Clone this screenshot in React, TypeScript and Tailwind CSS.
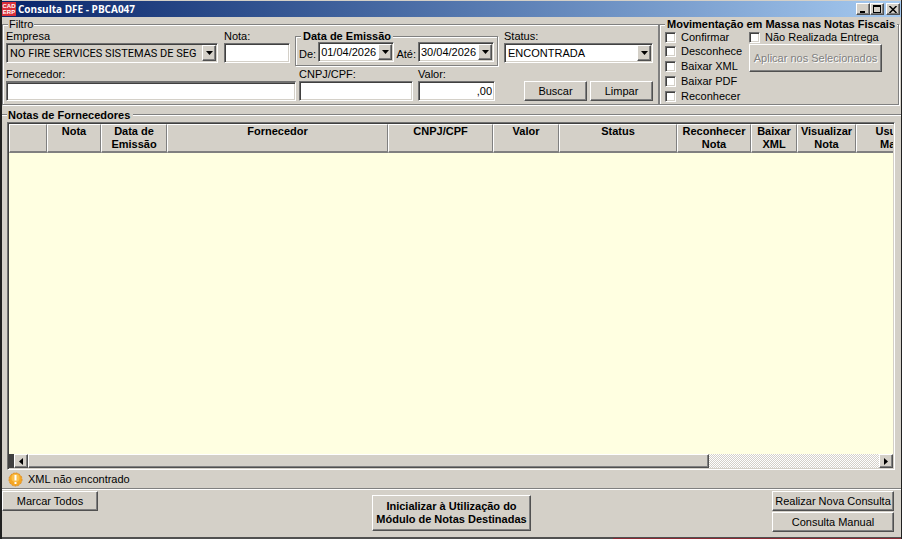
import { useState } from "react";
import type { ButtonHTMLAttributes, InputHTMLAttributes, ReactNode } from "react";

const raised =
  "border border-t-white border-l-white border-r-[#505050] border-b-[#505050] shadow-[inset_-1px_-1px_0_#808080] bg-[#d4d0c8]";
const sunken =
  "border border-t-[#707070] border-l-[#707070] border-r-white border-b-white shadow-[inset_1px_1px_0_#404040,inset_-1px_-1px_0_#d4d0c8]";
const groove =
  "min-w-0 border border-[#808080] shadow-[1px_1px_0_#fff,inset_1px_1px_0_#fff]";

const columns = [
  { title: ["", ""], width: "w-[38px]" },
  { title: ["Nota", ""], width: "w-[54px]" },
  { title: ["Data de", "Emissão"], width: "w-[66px]" },
  { title: ["Fornecedor", ""], width: "w-[221px]" },
  { title: ["CNPJ/CPF", ""], width: "w-[105px]" },
  { title: ["Valor", ""], width: "w-[66px]" },
  { title: ["Status", ""], width: "w-[118px]" },
  { title: ["Reconhecer", "Nota"], width: "w-[74px]" },
  { title: ["Baixar", "XML"], width: "w-[46px]" },
  { title: ["Visualizar", "Nota"], width: "w-[59px]" },
  { title: ["Usuário", "Manif."], width: "w-[80px]" },
];

const massActions = ["Confirmar", "Desconhece", "Baixar XML", "Baixar PDF", "Reconhecer"];

function Button({ className = "", ...props }: ButtonHTMLAttributes<HTMLButtonElement>) {
  return (
    <button
      type="button"
      className={`flex items-center justify-center whitespace-nowrap ${raised} ${className}`}
      {...props}
    />
  );
}

interface FieldProps {
  id: string;
  label: string;
  className?: string;
  children: ReactNode;
}

function Field({ id, label, className = "", children }: FieldProps) {
  return (
    <div className={`flex flex-col ${className}`}>
      <label htmlFor={id} className="h-[13px] leading-[13px]">
        {label}
      </label>
      {children}
    </div>
  );
}

function TextBox({ className = "", ...props }: InputHTMLAttributes<HTMLInputElement>) {
  return (
    <input
      type="text"
      className={`h-5 w-full bg-white px-1 outline-none ${sunken} ${className}`}
      {...props}
    />
  );
}

function Arrow() {
  return (
    <svg width="7" height="4" viewBox="0 0 7 4" fill="#000" className="shrink-0">
      <path d="M0 0h7L3.5 4z" />
    </svg>
  );
}

function ComboBox({ id, value, className = "" }: { id: string; value: string; className?: string }) {
  return (
    <div className="relative">
      <select
        id={id}
        defaultValue={value}
        className={`h-5 w-full appearance-none pl-[3px] pr-3 outline-none ${sunken} ${className}`}
      >
        <option>{value}</option>
      </select>
      <span
        className={`pointer-events-none absolute right-[2px] top-[2px] flex h-4 w-[14px] items-center justify-center ${raised}`}
      >
        <Arrow />
      </span>
    </div>
  );
}

function DateBox({ id, label, value }: { id: string; label: string; value: string }) {
  return (
    <div className="flex items-center gap-[2px]">
      <label htmlFor={id} className="pt-1">
        {label}
      </label>
      <div className={`flex h-5 w-[76px] bg-white p-px ${sunken}`}>
        <input id={id} type="text" defaultValue={value} className="min-w-0 flex-1 pl-px outline-none" />
        <Button aria-label={label} className="w-[14px] shrink-0">
          <Arrow />
        </Button>
      </div>
    </div>
  );
}

function CheckBox({ label }: { label: string }) {
  return (
    <label className="flex h-[14px] items-center gap-[5px] whitespace-nowrap">
      <input
        type="checkbox"
        className={`size-[11px] shrink-0 appearance-none bg-white checked:bg-[#404040] ${sunken}`}
      />
      {label}
    </label>
  );
}

function TitleBar() {
  return (
    <header className="flex h-4 items-center bg-linear-to-r from-[#0a246a] to-[#a6caf0] pr-px">
      {/* logo */}
      <svg width="14" height="14" viewBox="0 0 14 14" className="shrink-0">
        <rect width="14" height="14" fill="#d8303a" />
        <g fontFamily="Liberation Sans" fontWeight="bold" fontSize="6" fill="#fff" textAnchor="middle">
          <text x="7" y="6">CAD</text>
          <text x="7" y="12">ERP</text>
        </g>
      </svg>
      <h1 className="ml-[2px] flex-1 font-['Open_Sans'] text-[10px] font-bold leading-4 text-white">
        Consulta DFE - PBCA047
      </h1>
      {/* window controls */}
      <Button aria-label="Minimizar" className="h-[12px] w-[14px]">
        <svg width="8" height="8" viewBox="0 0 8 8">
          <path d="M1 6h5v2H1z" />
        </svg>
      </Button>
      <Button aria-label="Maximizar" className="h-[12px] w-[14px]">
        <svg width="8" height="8" viewBox="0 0 8 8">
          <path d="M0 0h8v8H0zM1 2v5h6V2z" fillRule="evenodd" />
        </svg>
      </Button>
      <Button aria-label="Fechar" className="ml-[2px] h-[12px] w-[14px]">
        <svg width="8" height="7" viewBox="0 0 8 7" stroke="#000" strokeWidth="1.5">
          <path d="M.5 0l7 7M7.5 0l-7 7" />
        </svg>
      </Button>
    </header>
  );
}

function Filters() {
  return (
    <fieldset className={`h-[87px] flex-1 pl-[3px] pr-[5px] ${groove}`}>
      <legend className="ml-[2px] h-3 bg-[#d4d0c8] px-px leading-3">Filtro</legend>
      <div className="flex">
        <Field id="empresa" label="Empresa" className="min-w-0 flex-1">
          <ComboBox
            id="empresa"
            value="NO FIRE SERVICES SISTEMAS DE SEG"
            className="bg-[#d4d0c8] font-[Roboto,sans-serif]"
          />
        </Field>
        <Field id="nota" label="Nota:" className="ml-[6px] w-[66px]">
          <TextBox id="nota" />
        </Field>
        {/* issue date */}
        <fieldset className={`ml-[5px] h-9 w-[203px] px-[3px] ${groove}`}>
          <legend className="ml-[2px] h-3 bg-[#d4d0c8] px-[2px] font-bold leading-3">Data de Emissão</legend>
          <div className="flex justify-between">
            <DateBox id="de" label="De:" value="01/04/2026" />
            <DateBox id="ate" label="Até:" value="30/04/2026" />
          </div>
        </fieldset>
        <Field id="status" label="Status:" className="ml-[6px] w-[149px]">
          <ComboBox id="status" value="ENCONTRADA" className="bg-white" />
        </Field>
      </div>
      <div className="mt-[2px] flex items-end">
        <Field id="fornecedor" label="Fornecedor:" className="min-w-0 flex-1">
          <TextBox id="fornecedor" className="border-t-2 border-t-[#505050]" />
        </Field>
        <Field id="cnpj" label="CNPJ/CPF:" className="ml-[3px] w-[114px]">
          <TextBox id="cnpj" />
        </Field>
        <Field id="valor" label="Valor:" className="ml-[5px] w-[77px]">
          <TextBox id="valor" defaultValue=",00" className="pr-[2px] text-right" />
        </Field>
        <Button className="ml-[29px] h-5 w-[63px]">Buscar</Button>
        <Button className="ml-[3px] h-5 w-[63px]">Limpar</Button>
      </div>
    </fieldset>
  );
}

function MassActions() {
  return (
    <fieldset className={`w-[240px] pl-[5px] ${groove}`}>
      <legend className="h-3 whitespace-nowrap bg-[#d4d0c8] px-[2px] font-bold leading-3">
        Movimentação em Massa nas Notas Fiscais
      </legend>
      <div className="flex">
        <div className="flex h-[73px] w-[84px] flex-col justify-between">
          {massActions.map((item) => (
            <CheckBox key={item} label={item} />
          ))}
        </div>
        <div>
          <CheckBox label="Não Realizada Entrega" />
          <Button
            disabled
            className="h-[28px] w-[133px] text-[#808080] [text-shadow:1px_1px_0_#fff]"
          >
            Aplicar nos Selecionados
          </Button>
        </div>
      </div>
    </fieldset>
  );
}

function Invoices() {
  const [offset, setOffset] = useState(0);

  return (
    <section className="flex min-w-0 flex-1 flex-col">
      <div className="flex h-3 items-center">
        <span className="h-[2px] w-[5px] border-t border-b border-t-[#808080] border-b-white" />
        <h2 className="px-px font-bold leading-3">Notas de Fornecedores</h2>
        <span className="ml-[2px] h-[2px] flex-1 border-t border-b border-t-[#808080] border-b-white" />
      </div>
      <div className={`ml-[5px] mr-[6px] mt-px flex flex-1 flex-col overflow-hidden bg-[#ffffe1] p-px ${sunken}`}>
        <div className="flex-1 overflow-hidden">
          <table
            className="w-[927px] table-fixed border-separate border-spacing-0"
            style={{ marginLeft: -offset }}
          >
            <thead>
              <tr>
                {columns.map(({ title, width }, i) => (
                  <th
                    key={i}
                    className={`h-[29px] border border-b-2 border-t-white border-l-white border-r-[#808080] border-b-[#808080] bg-[#d4d0c8] p-0 align-top leading-[13px] ${width}`}
                  >
                    {title[0]}
                    <br />
                    {title[1]}
                  </th>
                ))}
              </tr>
            </thead>
            <tbody />
          </table>
        </div>
        {/* horizontal scrollbar */}
        <div className="flex h-[14px] bg-[#e9e7e3] bg-[repeating-conic-gradient(#fff_0_25%,#d4d0c8_0_50%)] bg-size-[2px_2px]">
          <span className="w-[5px] bg-[#404040]" />
          <Button aria-label="Rolar para a esquerda" className="w-[14px]" onClick={() => setOffset(0)}>
            <svg width="4" height="7" viewBox="0 0 4 7">
              <path d="M4 0v7L0 3.5z" />
            </svg>
          </Button>
          <div className="flex flex-1">
            <div className={`w-4/5 ${raised}`} />
          </div>
          <Button aria-label="Rolar para a direita" className="w-[14px]" onClick={() => setOffset(43)}>
            <svg width="4" height="7" viewBox="0 0 4 7">
              <path d="M0 0v7l4-3.5z" />
            </svg>
          </Button>
        </div>
      </div>
      {/* icon legend */}
      <p className="flex h-[18px] items-center gap-[5px] pl-[6px]">
        <svg width="15" height="15" viewBox="0 0 15 15">
          <circle cx="7.5" cy="7.5" r="6.5" fill="#f5a623" stroke="#e08a1a" strokeDasharray="2 1" />
          <circle cx="7.5" cy="6" r="4" fill="#fbc04d" />
          <path d="M6.5 3h2v5.5h-2zM6.5 10h2v2h-2z" fill="#fff" />
        </svg>
        XML não encontrado
      </p>
    </section>
  );
}

function App() {
  return (
    <div className="flex min-h-screen flex-col border-l-2 border-r border-l-[#202020] border-r-[#202020] bg-[#d4d0c8] pt-px font-['Liberation_Sans',Arial,sans-serif] text-[11px] leading-[13px] text-black">
      <TitleBar />
      <main className="flex flex-1 flex-col pt-px">
        <div className="flex pr-[2px]">
          <Filters />
          <MassActions />
        </div>
        <div className="flex flex-1 flex-col pt-1">
          <Invoices />
        </div>
      </main>
      <footer className="flex h-[49px] items-start border-t border-[#808080] pt-[2px] shadow-[inset_0_1px_0_#fff]">
        <div className="flex-1">
          <Button className="h-5 w-24">Marcar Todos</Button>
        </div>
        <Button className="mt-1 h-9 w-[159px] font-bold">
          Inicializar à Utilização do
          <br />
          Módulo de Notas Destinadas
        </Button>
        <div className="flex flex-1 flex-col items-end gap-px">
          <Button className="mr-[7px] h-5 w-[122px]">Realizar Nova Consulta</Button>
          <Button className="mr-[7px] h-5 w-[122px]">Consulta Manual</Button>
        </div>
      </footer>
      {/* window bottom edge */}
      <div className="flex h-[2px] items-end justify-end bg-[#505050]">
        <span className="h-px w-[32%] bg-[#8a2a34]" />
      </div>
    </div>
  );
}

export default App;
